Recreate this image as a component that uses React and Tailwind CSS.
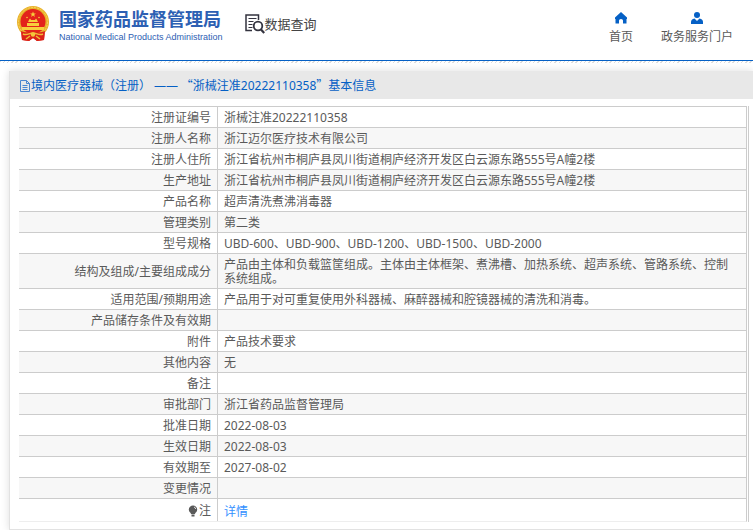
import React from 'react';

const rows = [
    { label: '注册证编号', value: '浙械注准20222110358' },
    { label: '注册人名称', value: '浙江迈尔医疗技术有限公司' },
    { label: '注册人住所', value: '浙江省杭州市桐庐县凤川街道桐庐经济开发区白云源东路555号A幢2楼' },
    { label: '生产地址', value: '浙江省杭州市桐庐县凤川街道桐庐经济开发区白云源东路555号A幢2楼' },
    { label: '产品名称', value: '超声清洗煮沸消毒器' },
    { label: '管理类别', value: '第二类' },
    { label: '型号规格', value: 'UBD-600、UBD-900、UBD-1200、UBD-1500、UBD-2000' },
    { label: '结构及组成/主要组成成分', value: '产品由主体和负载篮筐组成。主体由主体框架、煮沸槽、加热系统、超声系统、管路系统、控制系统组成。' },
    { label: '适用范围/预期用途', value: '产品用于对可重复使用外科器械、麻醉器械和腔镜器械的清洗和消毒。' },
    { label: '产品储存条件及有效期', value: '' },
    { label: '附件', value: '产品技术要求' },
    { label: '其他内容', value: '无' },
    { label: '备注', value: '' },
    { label: '审批部门', value: '浙江省药品监督管理局' },
    { label: '批准日期', value: '2022-08-03' },
    { label: '生效日期', value: '2022-08-03' },
    { label: '有效期至', value: '2027-08-02' },
    { label: '变更情况', value: '' },
];

function Emblem()
{
    return (
        <svg className="h-9 w-8 shrink-0" viewBox="0 0 32 36" aria-hidden="true">
            <path d="M4 23 L5 34 L12 35 L16 32 L20 35 L27 34 L28 23Z" fill="#dc2318" />
            <circle cx="16" cy="16" r="16" fill="#e9b22c" />
            <circle cx="16" cy="16" r="14.5" fill="none" stroke="#f6d35a" strokeWidth="1" strokeDasharray="2 1" />
            <circle cx="16" cy="15.5" r="12.5" fill="#e3231b" />
            <path d="M16 5.5l.8 2h2.1l-1.7 1.3.7 2.1-1.9-1.3-1.9 1.3.7-2.1-1.7-1.3h2.1z" fill="#f8cf3c" />
            <g fill="#f8cf3c">
                <circle cx="10" cy="11.5" r="0.8" />
                <circle cx="13" cy="13.5" r="0.8" />
                <circle cx="19" cy="13.5" r="0.8" />
                <circle cx="22" cy="11.5" r="0.8" />
                <path d="M11 16l1-2h8l1 2zM10 17h12v3H10zM5 21h22v3H5z" />
            </g>
            <path d="M4 25c4 2 8 1 12 1s8 1 12-1l-1 9-7 1-4-3-4 3-7-1z" fill="#dc2318" />
            <path d="M6 28c4 2 6-1 10-1s6 3 10 1M9 33l4-3M23 33l-4-3" fill="none" stroke="#f1bd35" strokeWidth="1.5" />
            <circle cx="16" cy="28.5" r="2.2" fill="#f5c63b" />
        </svg>
    );
}

function SearchDocIcon()
{
    return (
        <svg className="h-5 w-5 shrink-0" viewBox="0 0 20 20" fill="none" stroke="#33333f" aria-hidden="true">
            <path d="M7 16.5H1V1h12.5v5" strokeWidth="1.5" />
            <path d="M3.5 4.5h8M3.5 7.5h5M3.5 10.5h4M3.5 13.5h4" strokeWidth="1.2" />
            <circle cx="13" cy="12" r="4.3" strokeWidth="1.8" />
            <path d="M16 15.5l3.2 3.5" strokeWidth="2.2" />
        </svg>
    );
}

function HomeIcon()
{
    return (
        <svg className="h-3 w-3" viewBox="0 0 12 12" fill="#0560c5" aria-hidden="true">
            <path d="M6 0L0 5.5V7h.5v4.5H4V8.5q0-1.500 2-1.500t2 1.500v3h3.500V7h.5V5.500z" />
        </svg>
    );
}

function UserIcon()
{
    return (
        <svg className="h-3 w-3" viewBox="0 0 12 12" fill="#0560c5" aria-hidden="true">
            <circle cx="6" cy="3" r="3" />
            <path d="M0 12V10q0-3 3.5-3.5L6 9l2.5-2.5Q12 7 12 10v2z" />
        </svg>
    );
}

function FileIcon()
{
    return (
        <svg className="h-3 w-3 shrink-0" viewBox="0 0 12 12" fill="none" stroke="#4a86d0" aria-hidden="true">
            <path d="M1.5 .5h6l3 3v8h-9zM7.5 .5v3h3M3.5 5.5h5M3.5 7.5h5M3.5 9.5h5" />
        </svg>
    );
}

function BulbIcon()
{
    return (
        <svg className="h-3 w-3" viewBox="0 0 12 12" aria-hidden="true">
            <path d="M6 .5a4.2 4.2 0 0 0-4.2 4.2C1.8 7 4 7.5 4 9h4c0-1.5 2.2-2 2.2-4.3A4.2 4.2 0 0 0 6 .5zM4.5 9.5h3v2h-3z" fill="#5a5a5a" />
            <path d="M7 2q1.5.5 1.7 2" stroke="#fff" fill="none" strokeWidth=".8" />
        </svg>
    );
}

export default function App()
{
    return (
        <div lang="zh-CN" className="overflow-hidden bg-white text-xs text-[#5a5a5a] [font-family:'Noto_Sans','Noto_Sans_CJK_SC',sans-serif]">
            <header className="flex h-[61px] items-start justify-between border-b border-[#0560c5] pl-[17px] pr-5">
                <div className="flex items-start">
                    <a href="#home" className="flex pt-[6px] text-[#2d60b3]">
                        <Emblem />
                        <span className="ml-[10px] flex flex-col pt-[3px]">
                            <span className="text-[18px] leading-5 font-bold whitespace-nowrap">国家药品监督管理局</span>
                            <span className="text-[9px] leading-4 whitespace-nowrap [font-family:'Liberation_Sans',sans-serif]">National Medical Products Administration</span>
                        </span>
                    </a>
                    <a href="#query" className="ml-[22px] flex items-center pt-[14px] text-[13px] leading-5 text-[#444]">
                        <SearchDocIcon />
                        <span className="whitespace-nowrap">数据查询</span>
                    </a>
                </div>
                <nav className="flex gap-7 pt-3">
                    <a href="#index" className="flex flex-col items-center gap-[5px]">
                        <HomeIcon />
                        <span className="leading-4">首页</span>
                    </a>
                    <a href="#portal" className="flex flex-col items-center gap-[5px]">
                        <UserIcon />
                        <span className="leading-4">政务服务门户</span>
                    </a>
                </nav>
            </header>
            <div className="h-[2px] bg-[repeating-linear-gradient(135deg,#ddd_0_1px,#fff_1px_3px)]" />

            <main className="mt-2 ml-[9px] border-b border-l border-[#e2e2e2] pb-[7px] shadow-[0_0_8px_#ddd]">
                <h1 className="flex h-7 items-center bg-[#e8e8e8] pt-px pl-[9px] text-xs text-[#0560c5]">
                    <FileIcon />
                    <span className="whitespace-nowrap">
                        境内医疗器械（注册） ——
                        <span className="[font-family:'Noto_Sans_CJK_SC',sans-serif]"> “</span>
                        浙械注准20222110358
                        <span className="[font-family:'Noto_Sans_CJK_SC',sans-serif]">”</span>
                        基本信息
                    </span>
                </h1>
                <div className="mt-[7px] mr-1 ml-[9px] border-r border-[#ccc] pr-px">
                    <table className="w-full table-fixed border-separate border-spacing-0 border-t border-r border-b border-t-[#ccc] border-r-[#ccc] border-b-[#eee] leading-[14px]">
                        <colgroup>
                            <col className="w-[198px]" />
                            <col />
                        </colgroup>
                        <tbody>
                            {rows.map((row) => (
                                <tr key={row.label} className="even:bg-[#f7f7f7]">
                                    <th scope="row" className="border-b border-[#ccc] pt-1 pr-[6px] pb-[2px] text-right font-normal">{row.label}</th>
                                    <td className="h-[21px] border-b border-l border-[#ccc] pt-1 pr-3 pb-[2px] pl-[6px]">{row.value}</td>
                                </tr>
                            ))}
                            <tr>
                                <th scope="row" className="pt-[2px] pr-[6px] text-right font-normal">
                                    <span className="flex items-center justify-end"><BulbIcon />注</span>
                                </th>
                                <td className="h-[22px] border-l border-[#ccc] pt-1 pl-[6px]">
                                    <a href="#detail" className="text-[#3390ff]">详情</a>
                                </td>
                            </tr>
                        </tbody>
                    </table>
                </div>
            </main>
        </div>
    );
}
